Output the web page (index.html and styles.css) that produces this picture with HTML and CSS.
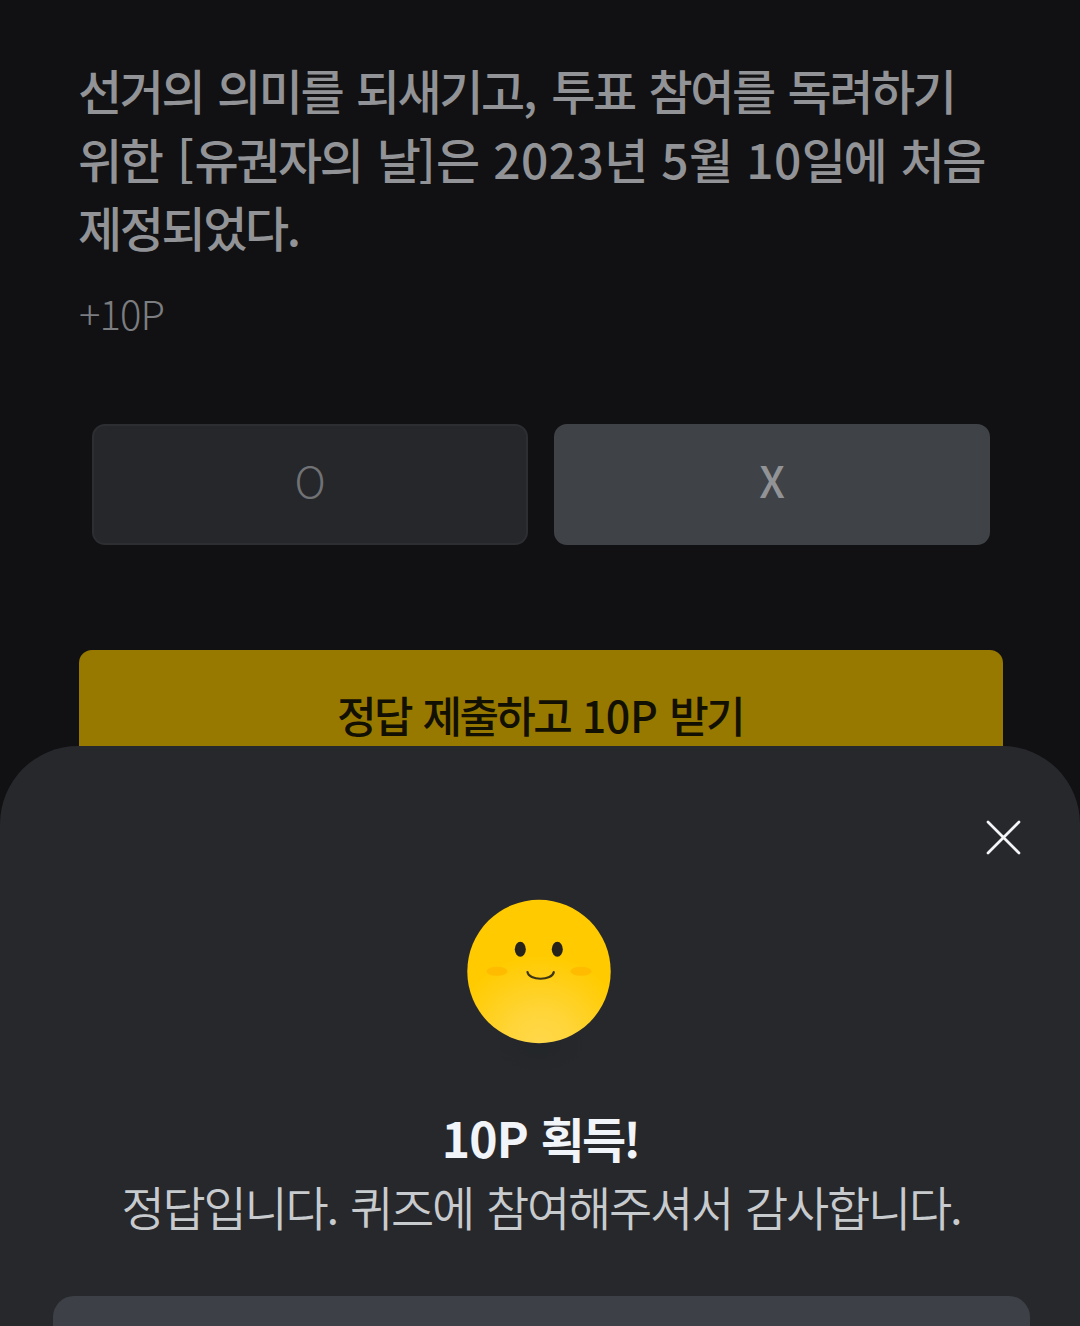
FILE: index.html
```html
<!DOCTYPE html>
<html lang="ko">
<head>
	<meta charset="UTF-8">
	<title>퀴즈</title>
	<link rel="stylesheet" href="styles.css">
</head>
<body>

	<div class="quiz">
		<h1 class="question">선거의 의미를 되새기고<span class="num">,</span> 투표 참여를 독려하기<br><span class="wide">위한 <span class="num">[</span>유권자의 날<span class="num">]</span>은 <span class="num">2023</span>년 <span class="num">5</span>월 <span class="num">10</span>일에 처음</span><br>제정되었다.</h1>
		<p class="point">+10P</p>
		<div class="answers">
			<button class="answer">O</button>
			<button class="answer current">X</button>
		</div>
		<button class="submit">정답 제출하고 <span class="num">10P</span> 받기</button>
	</div>

	<div class="sheet">
		<button class="close" aria-label="닫기">
			<svg width="36" height="36" viewBox="0 0 36 36" fill="none" stroke="#f4f5f7" stroke-width="2.7" stroke-linecap="round">
				<path d="M2 3L33 34M33 3L2 34"/>
			</svg>
		</button>
		<svg class="face" width="200" height="190" viewBox="0 0 200 190">
			<defs>
				<radialGradient id="skin" gradientUnits="userSpaceOnUse" cx="100" cy="164" r="88">
					<stop offset="0" stop-color="#ffd84b"/>
					<stop offset="0.35" stop-color="#ffd53a"/>
					<stop offset="1" stop-color="#ffcb00"/>
				</radialGradient>
				<radialGradient id="shadow">
					<stop offset="0" stop-color="#232628"/>
					<stop offset="0.6" stop-color="#25272a"/>
					<stop offset="1" stop-color="#27282c"/>
				</radialGradient>
			</defs>
			<ellipse cx="100" cy="162" rx="50" ry="36" fill="url(#shadow)"/>
			<circle cx="99" cy="91.5" r="71.7" fill="url(#skin)"/>
			<ellipse cx="80.3" cy="69.3" rx="5.5" ry="7.5" fill="#26241a"/>
			<ellipse cx="117.3" cy="69.3" rx="5.5" ry="7.5" fill="#26241a"/>
			<ellipse cx="57" cy="91.3" rx="10.5" ry="4.5" fill="#ffbb00"/>
			<ellipse cx="141" cy="91.3" rx="10.5" ry="4.5" fill="#ffbb00"/>
			<path d="M87.5 92C88.5 101 112.500 101 113.800 92" fill="none" stroke="#3d3615" stroke-width="2.2" stroke-linecap="round"/>
		</svg>
		<h2 class="result"><span class="num">10P</span> 획득!</h2>
		<p class="message">정답입니다. 퀴즈에 참여해주셔서 감사합니다.</p>
		<button class="confirm" aria-label="확인"></button>
	</div>

</body>
</html>
```

FILE: styles.css
```css
* {
	padding: 0;
	margin: 0;
	box-sizing: border-box;
}

body {
	height: 1326px;
	position: relative;
	overflow: hidden;
	background-color: #111113;
	font-family: "Noto Sans CJK KR", sans-serif;
}

button {
	border: none;
	background: none;
	font-family: inherit;
}

svg {
	display: block;
}

.quiz {
	padding: 55px 77px 0 78px;
}

.question {
	font-size: 48px;
	font-weight: 500;
	line-height: 68.5px;
	letter-spacing: -2.4px;
	word-spacing: 2.6px;
	white-space: nowrap;
	color: #929396;
}

.question .wide {
	word-spacing: 4.3px;
}

.question .num {
	letter-spacing: 0.4px;
}

.point {
	margin-top: 22px;
	padding-left: 1px;
	font-size: 40px;
	font-weight: 300;
	line-height: 60px;
	letter-spacing: -0.9px;
	color: #7c7d80;
}

.answers {
	display: flex;
	gap: 26px;
	margin: 81px 13px 0 14px;
}

.answer {
	flex: 1;
	height: 121px;
	padding-bottom: 10px;
	border: 2px solid #2d2e31;
	border-radius: 13px;
	background-color: #26272b;
	font-size: 43px;
	font-weight: 300;
	color: #707275;
}

.answer.current {
	border-color: #3f4246;
	background-color: #3f4246;
	font-weight: 500;
	color: #929396;
}

.submit {
	display: block;
	width: calc(100% - 1px);
	height: 136px;
	margin: 105px 0 0 1px;
	padding: 0 2px 7px 0;
	border-radius: 13px;
	background-color: #987900;
	font-size: 43px;
	font-weight: 500;
	letter-spacing: -2.7px;
	word-spacing: 2.4px;
	color: #121002;
}

.submit .num {
	letter-spacing: -0.4px;
}

/* 하단 팝업 */
.sheet {
	position: absolute;
	left: 0;
	right: 0;
	bottom: 0;
	height: 580px;
	padding: 73px 50px 0 53px;
	border-radius: 78px 78px 0 0;
	background-color: #27282c;
	display: flex;
	flex-direction: column;
	align-items: center;
	overflow: hidden;
}

.close {
	align-self: flex-end;
	margin-right: 8px;
}

.face {
	flex-shrink: 0;
	margin-top: 25px;
	margin-right: 3px;
}

.result {
	margin-top: 32px;
	padding-right: 3px;
	font-size: 48px;
	font-weight: 700;
	line-height: 70px;
	letter-spacing: -2.8px;
	word-spacing: 2px;
	color: #f1f4f9;
}

.result .num {
	letter-spacing: -0.8px;
}

.message {
	padding-right: 1px;
	font-size: 47px;
	font-weight: 350;
	line-height: 68px;
	letter-spacing: -2.25px;
	word-spacing: 2.2px;
	white-space: nowrap;
	color: #c8cbce;
}

.confirm {
	flex-shrink: 0;
	width: 100%;
	height: 130px;
	margin-top: 56px;
	border-radius: 21px;
	background-color: #3e4047;
}
```
